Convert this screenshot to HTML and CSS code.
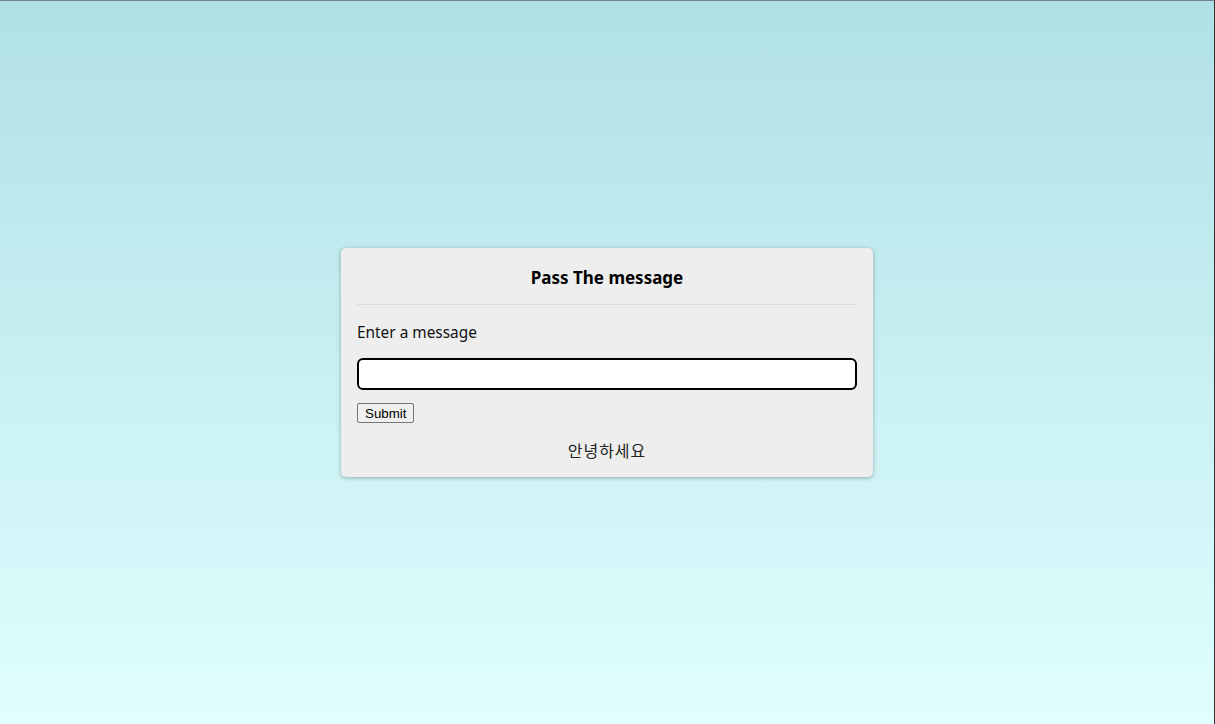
FILE: index.html
```html
<!DOCTYPE html>
<html lang="ko">
<head>
<meta charset="utf-8">
<title>Pass The message</title>
<link rel="stylesheet" href="styles.css">
</head>
<body>
<div class="page">
  <div class="card">
    <h2 class="title">Pass The message</h2>
    <label class="label" for="msg">Enter a message</label>
    <input class="field" id="msg" type="text" autofocus>
    <div class="actions"><button class="submit" type="button">Submit</button></div>
    <p class="output">안녕하세요</p>
  </div>
</div>
</body>
</html>
```

FILE: styles.css
```css
html, body {
  margin: 0;
  padding: 0;
  height: 100%;
}
body {
  font-family: "Noto Sans", "Noto Sans CJK KR", sans-serif;
  color: #111;
}
.page {
  height: 100%;
  box-sizing: border-box;
  border-top: 1px solid #7a8387;
  border-right: 1px solid #333;
  background: linear-gradient(to bottom, #b0e0e6, #e0ffff);
  display: flex;
  align-items: center;
  justify-content: center;
}
.card {
  width: 500px;
  padding: 16px;
  background: #eeeeee;
  border-radius: 5px;
  box-shadow: 0 1px 4px rgba(0, 0, 0, 0.3);
  display: flex;
  flex-direction: column;
}
.title {
  margin: 0;
  font-size: 17px;
  font-weight: 700;
  text-align: center;
  line-height: 28px;
  padding-bottom: 12px;
  border-bottom: 1px solid #dcdcdc;
  color: #000;
}
.label {
  margin-top: 17px;
  font-size: 15.4px;
  line-height: 22px;
}
.field {
  margin-top: 14px;
  height: 32px;
  box-sizing: border-box;
  border: 2px solid #000;
  border-radius: 6px;
  padding: 0 15px;
  background: #fff;
  font-size: 16px;
  outline: none;
  caret-color: #000;
}
.actions {
  margin-top: 13px;
  display: flex;
}
.submit {
  font-family: "Liberation Sans", Arial, sans-serif;
  font-size: 13.33px;
  padding: 1px 7px;
  height: 20px;
  border: 1px solid #767676;
  border-radius: 2px;
  background: #efefef;
  color: #000;
}
.output {
  margin: 16px 0 0;
  text-align: center;
  font-size: 16px;
  line-height: 22px;
  letter-spacing: 1px;
  font-family: "Noto Sans CJK KR", sans-serif;
  color: #222;
}
```
